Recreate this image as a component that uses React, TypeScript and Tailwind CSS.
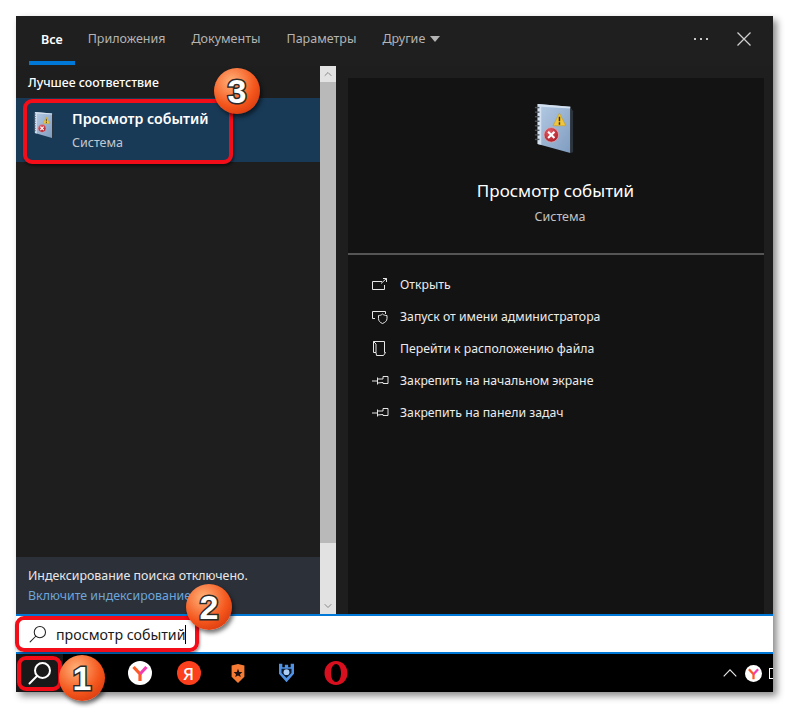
import React from 'react';
import { ChevronDown, ChevronUp } from 'lucide-react';

const font = 'font-["Noto_Sans","Open_Sans",sans-serif]';

const BookIcon = ({ className }: { className: string }) => (
  <svg viewBox="0 0 44 56" className={className}>
    <defs>
      <linearGradient id="cover" x1="0" y1="0" x2="1" y2="1">
        <stop offset="0" stopColor="#b5cbe4" />
        <stop offset="1" stopColor="#7f9cc0" />
      </linearGradient>
      <radialGradient id="err" cx="0.4" cy="0.3" r="0.8">
        <stop offset="0" stopColor="#e2606a" />
        <stop offset="1" stopColor="#a5141f" />
      </radialGradient>
    </defs>
    <path d="M4 1 L40 4 L40 55 L4 45 Z" fill="url(#cover)" />
    <path d="M4 1 L40 4 L40 6 L8 4 L8 46 L4 45 Z" fill="#d3e0ef" />
    <path d="M40 4 L43 9 L43 54 L40 55 Z" fill="#2b333d" />
    {[5, 10, 15, 20, 25, 30, 35, 40].map((y) => (
      <path key={y} d="M1 0 H6" transform={`translate(0 ${y})`} stroke="#4b5560" strokeWidth="1.6" />
    ))}
    <path d="M21 25 L28 11 L35 25 Z" fill="#efc63e" stroke="#c89a18" strokeWidth="0.6" />
    <path d="M28 15 V20 M28 21 V24" stroke="#3a2c00" strokeWidth="1.6" />
    <circle cx="19" cy="35" r="8" fill="url(#err)" stroke="#e9b0b4" strokeWidth="0.8" />
    <path d="M15.5 31.5 L22.5 38.5 M22.5 31.5 L15.5 38.5" stroke="#fff" strokeWidth="2.2" />
  </svg>
);

const OpenIcon = () => (
  <svg viewBox="0 0 16 14" className="w-4 h-[14px]" fill="none" stroke="#e6e6e6" strokeWidth="1">
    <path d="M10 3.5 H0.5 V11.5 H12.5 V7" />
    <path d="M9 5.5 L14.5 0.5 M11 0.5 H14.5 V4" />
  </svg>
);

const ShieldIcon = () => (
  <svg viewBox="0 0 16 14" className="w-4 h-[14px]" fill="none" stroke="#e6e6e6" strokeWidth="1">
    <path d="M3 8.5 H0.5 V1.5 H13.5 V4" />
    <path d="M6.5 5.5 C8 5.5 9.5 5 10.5 4 C11.5 5 13 5.5 15 5.5 V8.5 C15 11 13 12.5 10.5 13.5 C8 12.5 6.5 11 6.5 8.5 Z" />
  </svg>
);

const FolderIcon = () => (
  <svg viewBox="0 0 16 16" className="w-4 h-4" fill="none" stroke="#e6e6e6" strokeWidth="1">
    <path d="M1.5 0.5 H12.5 V11.5 H13.5 L11.5 14.5 H4.5 L4 11.5 H1.5 Z" />
    <path d="M1.5 0.5 L4 3 V11.5" />
  </svg>
);

const PinIcon = () => (
  <svg viewBox="0 0 17 10" className="w-[17px] h-[10px]" fill="none" stroke="#e6e6e6" strokeWidth="1">
    <path d="M0 5 H5.5 M5.5 1.5 V8.5 M5.5 3 H11 V0.5 H16 V7.5 H11 V6.5 L5.5 7" />
  </svg>
);

const SearchGlass = ({ className, color, width }: { className: string; color: string; width: number }) => (
  <svg viewBox="0 0 24 24" className={className} fill="none" stroke={color} strokeWidth={width}>
    <circle cx="14.5" cy="9.5" r="7.5" />
    <path d="M9 15 L1.5 22.5" strokeLinecap="round" />
  </svg>
);

const YandexBrowser = ({ size }: { size: string }) => (
  <svg viewBox="0 0 24 24" className={size}>
    <circle cx="12" cy="12" r="12" fill="#fff" />
    <path d="M5.5 6 L12 13 V20" fill="none" stroke="#ff5a26" strokeWidth="3.2" />
    <path d="M12 13 L18.5 6" fill="none" stroke="#f23fb0" strokeWidth="3.2" />
  </svg>
);

const YaIcon = () => (
  <div className="w-6 h-6 rounded-full bg-[#fc3f1d] flex items-center justify-center text-white font-medium text-[17px] leading-none">
    Я
  </div>
);

const BadgeIcon = () => (
  <svg viewBox="0 0 20 26" className="w-[16px] h-[21px]">
    <path d="M2 3 L10 1 L18 3 V17 L10 25 L2 17 Z" fill="#f57a34" />
    <path d="M10 7 L11.6 11 L15.5 11.2 L12.5 13.8 L13.5 17.5 L10 15.5 L6.5 17.5 L7.5 13.8 L4.5 11.2 L8.4 11 Z" fill="#1c1010" />
  </svg>
);

const ShieldApp = () => (
  <svg viewBox="0 0 20 24" className="w-[17px] h-[20px]">
    <path d="M1 1 H5 V5 H8 V2 H12 V5 H15 V1 H19 V13 L10 23 L1 13 Z" fill="#4f92e6" />
    <path d="M4 7 H16 V12 L10 18 L4 12 Z" fill="#0c1a30" />
    <circle cx="10" cy="11" r="3.5" fill="#a9cdf5" />
  </svg>
);

const OperaIcon = () => (
  <svg viewBox="0 0 24 24" className="w-6 h-6">
    <path
      fillRule="evenodd"
      d="M12 0 C18.5 0 23.5 5.4 23.5 12 C23.5 18.6 18.5 24 12 24 C5.5 24 0.5 18.6 0.5 12 C0.5 5.4 5.5 0 12 0 Z M12 3 C9 3 7 7 7 12 C7 17 9 21 12 21 C15 21 17 17 17 12 C17 7 15 3 12 3 Z"
      fill="#d80f1e"
    />
  </svg>
);

const Step = ({ n, className }: { n: number; className: string }) => (
  <div
    className={`absolute w-[46px] h-[46px] rounded-full flex items-center justify-center bg-[radial-gradient(circle_at_38%_30%,#ffb27a,#f4561c_55%,#c92a08)] shadow-[2px_3px_4px_rgba(0,0,0,0.55)] text-white font-bold text-[34px] leading-none font-['Liberation_Sans',sans-serif] [-webkit-text-stroke:3px_#2a2a2a] [paint-order:stroke_fill] ${className}`}
  >
    {n}
  </div>
);

const tabs = ['Приложения', 'Документы', 'Параметры'];

const actions = [
  { icon: <OpenIcon />, label: 'Открыть' },
  { icon: <ShieldIcon />, label: 'Запуск от имени администратора' },
  { icon: <FolderIcon />, label: 'Перейти к расположению файла' },
  { icon: <PinIcon />, label: 'Закрепить на начальном экране' },
  { icon: <PinIcon />, label: 'Закрепить на панели задач' },
];

export default function App() {
  return (
    <div className={`w-[789px] h-[708px] bg-white pt-4 pl-4 overflow-hidden ${font}`}>
      <div className="relative w-[757px] h-[676px] flex flex-col shadow-[4px_4px_7px_rgba(0,0,0,0.45)]">
        {/* tab bar */}
        <div className="h-[50px] bg-[#1f1f1f] flex items-stretch pl-[13px] text-[12.5px]">
          <div className="px-3 flex items-center text-white font-semibold border-b-[4px] border-[#0078d7] pt-[3px] mb-px">Все</div>
          {tabs.map((t) => (
            <div key={t} className="px-[13px] flex items-center text-[#b4b4b4] pb-[4px]">
              {t}
            </div>
          ))}
          <div className="px-[13px] flex items-center gap-[5px] text-[#b4b4b4] pb-[4px]">
            Другие
            <svg viewBox="0 0 10 6" className="w-[10px] h-[6px]">
              <path d="M0 0 H10 L5 6 Z" fill="#b4b4b4" />
            </svg>
          </div>
          <div className="ml-auto flex items-center gap-[29px] pr-[22px] pb-[4px]">
            <div className="flex gap-[4px]">
              <span className="w-[2px] h-[2px] bg-[#c8c8c8]" />
              <span className="w-[2px] h-[2px] bg-[#c8c8c8]" />
              <span className="w-[2px] h-[2px] bg-[#c8c8c8]" />
            </div>
            <svg viewBox="0 0 14 14" className="w-[14px] h-[14px]" stroke="#cfcfcf" strokeWidth="1.3">
              <path d="M0.5 0.5 L13.5 13.5 M13.5 0.5 L0.5 13.5" />
            </svg>
          </div>
        </div>

        {/* results and preview */}
        <div className="h-[548px] flex">
          <div className="w-[304px] bg-[#1e1e1e] flex flex-col">
            <div className="h-[32px] pl-3 pt-2 text-[12.3px] text-white font-medium">Лучшее соответствие</div>
            <div className="h-[64px] bg-[#183a57] flex items-start pl-[17px]">
              <BookIcon className="w-[21px] h-[28px] mt-[13px]" />
              <div className="ml-[18px]">
                <div className="text-[14.2px] font-semibold text-white leading-5 mt-[11px]">Просмотр событий</div>
                <div className="text-[12.5px] text-[#c2c8ce] leading-5 mt-[4px]">Система</div>
              </div>
            </div>
            <div className="mt-auto h-[57px] bg-[#2c3038] pl-3 pt-[9px] text-[12.4px] leading-5">
              <div className="text-[#e8e8e8]">Индексирование поиска отключено.</div>
              <div className="text-[#6ba6dc]">Включите индексирование</div>
            </div>
          </div>

          <div className="w-4 bg-[#b9b9b9] flex flex-col">
            <div className="h-4 bg-[#e2e2e2] flex items-center justify-center">
              <ChevronUp className="w-3 h-3 text-[#8a8a8a]" />
            </div>
            <div className="flex-1" />
            <div className="h-[71px] bg-[#e2e2e2] flex items-end justify-center pb-[2px]">
              <ChevronDown className="w-3 h-3 text-[#8a8a8a]" />
            </div>
          </div>

          <div className="flex-1 bg-[#1e1e1e] pt-3 pl-3 pr-[9px]">
            <div className="h-full bg-[#131313] flex flex-col">
              <div className="h-[177px] border-b-2 border-[#555555] flex flex-col items-center pl-px">
                <BookIcon className="w-[40px] h-[51px] mt-[25px] mr-[5px]" />
                <div className="text-[17px] text-white leading-6 mt-[25px] mr-[2px]">Просмотр событий</div>
                <div className="text-[12.5px] text-[#c2c2c2] leading-5 mt-1 ml-[7px]">Система</div>
              </div>
              <div className="pl-6 pt-[14px]">
                {actions.map((a) => (
                  <div key={a.label} className="h-8 flex items-center text-[12.25px] text-[#ececec]">
                    <div className="w-7 flex items-center">{a.icon}</div>
                    {a.label}
                  </div>
                ))}
              </div>
            </div>
          </div>
        </div>

        {/* search input */}
        <div className="h-[40px] bg-white border-y-2 border-[#0078d7] flex items-center pl-[13px] text-[#1a1a1a] text-[14.2px]">
          <SearchGlass className="w-[18px] h-[18px]" color="#222222" width={1.4} />
          <span className="ml-[9px] mt-px">просмотр событий</span>
          <span className="w-px h-[19px] bg-black" />
        </div>

        {/* taskbar */}
        <div className="h-[38px] bg-black flex items-center relative">
          <div className="w-[47px] h-full bg-[#191919] flex items-center justify-center">
            <SearchGlass className="w-[24px] h-[24px]" color="#ffffff" width={2} />
          </div>
          <div className="ml-[52px] flex items-center">
            {[<YandexBrowser size="w-6 h-6" />, <YaIcon />, <BadgeIcon />, <ShieldApp />, <OperaIcon />].map((icon, i) => (
              <div key={i} className="w-[49px] flex justify-center">
                {icon}
              </div>
            ))}
          </div>
          <div className="ml-auto flex items-center">
            <svg viewBox="0 0 12 7" className="w-[14px] h-2 mr-[8px]" fill="none" stroke="#e8e8e8" strokeWidth="1">
              <path d="M0.5 6.5 L6 0.8 L11.5 6.5" />
            </svg>
            <YandexBrowser size="w-[17px] h-[17px]" />
            <div className="w-[4px] h-[11px] ml-[7px] border-y border-l border-white" />
          </div>
        </div>

        {/* red highlights and step numbers */}
        <div className="absolute left-[7px] top-[83px] w-[210px] h-[65px] rounded-[9px] border-[4px] border-[#f20d18] shadow-[1px_2px_3px_rgba(0,0,0,0.5)]" />
        <div className="absolute left-[-1px] top-[600px] w-[184px] h-[36px] rounded-[9px] border-[4px] border-[#f20d18] shadow-[1px_2px_3px_rgba(0,0,0,0.4)]" />
        <div className="absolute left-[1px] top-[640px] w-[45px] h-[35px] rounded-[9px] border-[4px] border-[#f20d18]" />
        <Step n={3} className="left-[198px] top-[52px]" />
        <Step n={2} className="left-[170px] top-[568px]" />
        <Step n={1} className="left-[43px] top-[639px]" />
      </div>
    </div>
  );
}
